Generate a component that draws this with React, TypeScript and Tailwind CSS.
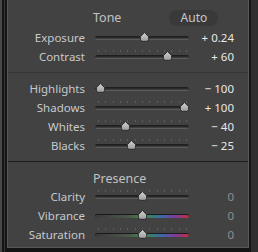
import React from "react";

type Row = {
  label: string;
  value: string;
  pos: number; // 0..1
  ticks?: boolean;
  color?: boolean;
  dim?: boolean;
};

const tone1: Row[] = [
  { label: "Exposure", value: "+ 0.24", pos: 0.524 },
  { label: "Contrast", value: "+ 60", pos: 0.8, ticks: true },
];
const tone2: Row[] = [
  { label: "Highlights", value: "− 100", pos: 0 },
  { label: "Shadows", value: "+ 100", pos: 1, ticks: true },
  { label: "Whites", value: "− 40", pos: 0.3, ticks: true },
  { label: "Blacks", value: "− 25", pos: 0.375, ticks: true },
];
const presence: Row[] = [
  { label: "Clarity", value: "0", pos: 0.5, ticks: true, dim: true },
  { label: "Vibrance", value: "0", pos: 0.5, color: true, dim: true },
  { label: "Saturation", value: "0", pos: 0.5, ticks: true, color: true, dim: true },
];

function Thumb() {
  return (
    <svg width="11" height="10" viewBox="0 0 11 10">
      <defs>
        <linearGradient id="tg" x1="0" y1="0" x2="0" y2="1">
          <stop offset="0" stopColor="#d2d2d2" />
          <stop offset="1" stopColor="#9c9c9c" />
        </linearGradient>
      </defs>
      <path
        d="M5.5 0.6 L9.6 4.6 L9.6 7.2 Q9.6 9.3 7.6 9.3 L3.4 9.3 Q1.4 9.3 1.4 7.2 L1.4 4.6 Z"
        fill="url(#tg)"
        stroke="#262626"
        strokeWidth="0.9"
      />
    </svg>
  );
}

function Slider({ row }: { row: Row }) {
  const ticks = Array.from({ length: 13 }, (_, i) => 3 + i * 7.33);
  return (
    <div className="relative w-[94px] h-[19px]">
      {row.ticks &&
        ticks.map((x, i) => (
          <div
            key={i}
            className="absolute top-[3px] w-px h-[2px] bg-[#5e5e5e]"
            style={{ left: x }}
          />
        ))}
      {row.color ? (
        <div className="absolute left-0 right-0 top-[8px] h-[4px] rounded-full bg-[linear-gradient(90deg,#3a3a3a,#4a564a_35%,#3e8a48_52%,#3a6aa6_70%,#7a3c9e_85%,#c42e3e)] shadow-[inset_0_1px_0_#1a1a1a]" />
      ) : (
        <div className="absolute left-0 right-0 top-[8px] h-[4px] rounded-full bg-[linear-gradient(#1a1a1a,#2c2c2c_45%,#3a3a3a_60%,#6a6a6a)]" />
      )}
      <div
        className="absolute top-[4px] -ml-[5.5px] flex"
        style={{ left: 5 + row.pos * 84 }}
      >
        <Thumb />
      </div>
    </div>
  );
}

function SliderRow({ row }: { row: Row }) {
  return (
    <div className="flex items-center h-[19px]">
      <div className="w-[77px] text-right text-[11.5px] leading-[19px] text-[#c6c9cd] whitespace-nowrap">
        {row.label}
      </div>
      <div className="ml-[10px]">
        <Slider row={row} />
      </div>
      <div
        className={
          "w-[45px] text-right text-[11.5px] leading-[19px] whitespace-nowrap " +
          (row.dim ? "text-[#8e8e8e]" : "text-[#e8e8e8]")
        }
      >
        {row.value}
      </div>
    </div>
  );
}

export default function App() {
  return (
    <div
      className="w-[258px] h-[252px] flex bg-[#141414] overflow-hidden"
      style={{ fontFamily: '"Noto Sans", "Open Sans", sans-serif' }}
    >
      <div className="w-[2px] bg-[#474747]" />
      <div className="w-[2px] bg-[#151515]" />
      <div className="w-px bg-[#333333]" />
      <div className="w-[2px] bg-[#151515]" />
      <div className="flex flex-col w-[242px]">
        <div className="h-[248px] bg-[#424242] border-l border-r border-b border-[#585858] flex flex-col">
          {/* Tone header */}
          <div className="h-[28px] pt-[8px] flex items-center">
            <div className="ml-[85px] text-[12.5px] text-[#c2c2c2] leading-[16px]">Tone</div>
            <div className="ml-[48px] w-[49px] h-[16px] rounded-full bg-[#393939] flex items-center justify-center text-[12px] text-[#c8c8c8] leading-[16px]">
              Auto
            </div>
          </div>
          {tone1.map((r) => (
            <SliderRow key={r.label} row={r} />
          ))}
          <div className="h-[6px]" />
          <div className="h-px bg-[#363636]" />
          <div className="h-[6px]" />
          {tone2.map((r) => (
            <SliderRow key={r.label} row={r} />
          ))}
          <div className="h-[6px]" />
          <div className="h-px bg-[#1c1c1c]" />
          <div className="h-[25px] pt-[9px] flex items-center">
            <div className="ml-[85px] text-[12.5px] text-[#c2c2c2] leading-[16px]">Presence</div>
          </div>
          {presence.map((r) => (
            <SliderRow key={r.label} row={r} />
          ))}
        </div>
      </div>
      <div className="w-[2px] bg-[#151515]" />
      <div className="flex-1 bg-[#2f2f2f]" />
    </div>
  );
}
